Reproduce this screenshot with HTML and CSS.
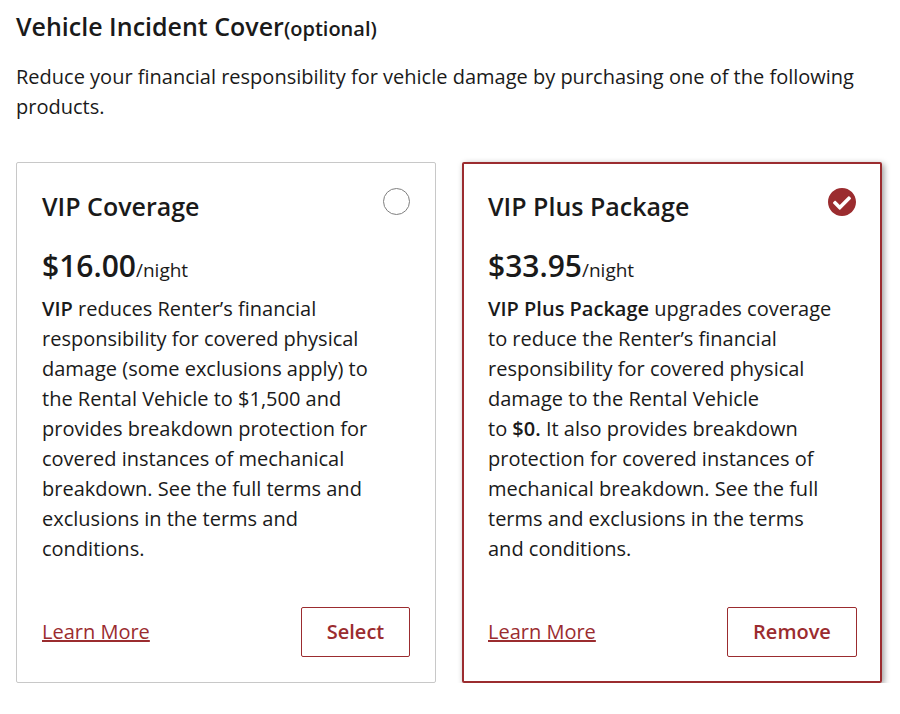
FILE: index.html
```html
<!DOCTYPE html>
<html lang="en">
<head>
<meta charset="utf-8">
<title>Vehicle Incident Cover</title>
<link rel="stylesheet" href="styles.css">
</head>
<body>
<section class="cover">
  <h2 class="cover-title">Vehicle Incident Cover<span class="cover-optional">(optional)</span></h2>
  <p class="cover-intro">Reduce your financial responsibility for vehicle damage by purchasing one of the following products.</p>
  <div class="cards">
    <article class="card">
      <div class="card-head">
        <h3 class="card-title">VIP Coverage</h3>
        <span class="radio"></span>
      </div>
      <div class="price"><span class="price-amount">$16.00</span><span class="price-unit">/night</span></div>
      <p class="card-text"><strong>VIP</strong> reduces Renter’s financial responsibility for covered physical damage (some exclusions apply) to the Rental Vehicle to $1,500 and provides breakdown protection for covered instances of mechanical breakdown. See the full terms and exclusions in the terms and conditions.</p>
      <div class="card-foot">
        <a class="learn" href="#">Learn More</a>
        <button class="action action-select" type="button">Select</button>
      </div>
    </article>
    <article class="card card-selected">
      <div class="card-head">
        <h3 class="card-title">VIP Plus Package</h3>
        <svg class="check" viewBox="8 8 496 496" width="28" height="28" aria-hidden="true">
          <path fill="#9b2c2f" d="M504 256c0 136.967-111.033 248-248 248S8 392.967 8 256 119.033 8 256 8s248 111.033 248 248zM227.314 387.314l184-184c6.248-6.248 6.248-16.379 0-22.627l-22.627-22.627c-6.248-6.249-16.379-6.249-22.628 0L216 308.118l-70.059-70.059c-6.248-6.248-16.379-6.248-22.628 0l-22.627 22.627c-6.248 6.248-6.248 16.379 0 22.627l104 104c6.249 6.249 16.379 6.249 22.628 0z"/>
        </svg>
      </div>
      <div class="price"><span class="price-amount">$33.95</span><span class="price-unit">/night</span></div>
      <p class="card-text"><strong>VIP Plus Package</strong> upgrades coverage to reduce the Renter’s financial responsibility for covered physical damage to the Rental Vehicle<br>to <strong>$0.</strong> It also provides breakdown protection for covered instances of mechanical breakdown. See the full terms and exclusions in the terms and conditions.</p>
      <div class="card-foot">
        <a class="learn" href="#">Learn More</a>
        <button class="action action-remove" type="button">Remove</button>
      </div>
    </article>
  </div>
</section>
</body>
</html>
```
FILE: styles.css
```css
* { box-sizing: border-box; }
html, body { margin: 0; background: #fff; }
body {
  font-family: "Open Sans", sans-serif;
  font-size: 20px;
  line-height: 30px;
  color: #1a1a1a;
  overflow: hidden;
}
.cover { padding: 8px 18px 0 16px; }
.cover-title {
  margin: 0;
  font-size: 25px;
  line-height: 36px;
  font-weight: 600;
}
.cover-optional { font-size: 20px; }
.cover-intro { margin: 15px 0 0; }
.cards {
  display: grid;
  grid-template-columns: 420px 420px;
  gap: 26px;
  margin-top: 40px;
}
.card {
  height: 521px;
  padding: 25px;
  border: 1px solid #c8c8c8;
  border-radius: 2px;
  display: flex;
  flex-direction: column;
}
.card-selected {
  border: 2px solid #9b2c2f;
  padding: 24px 23px 24px 24px;
  box-shadow: 2px 2px 6px rgba(0, 0, 0, 0.4);
}
.card-head {
  display: flex;
  justify-content: space-between;
  align-items: flex-start;
  height: 57px;
}
.card-title {
  margin: 0;
  font-size: 25px;
  line-height: 36px;
  font-weight: 600;
}
.radio {
  width: 27px;
  height: 27px;
  border: 1px solid #7f7f7f;
  border-radius: 50%;
}
.check { margin: 0 1px 0 0; }
.price { line-height: 41px; height: 49px; }
.price-amount { font-size: 30px; font-weight: 600; }
.price-unit { font-size: 19px; }
.card-text { margin: 0; padding-right: 20px; }
.card-text strong { font-weight: 600; }
.card-foot {
  margin-top: auto;
  display: flex;
  justify-content: space-between;
  align-items: center;
}
.learn { color: #9b2c2f; text-decoration: underline; }
.action {
  height: 50px;
  padding: 0;
  background: #fff;
  border: 1px solid #9b2c2f;
  border-radius: 2px;
  color: #9b2c2f;
  font: 600 20px/28px "Open Sans", sans-serif;
}
.action-select { width: 109px; }
.action-remove { width: 130px; }
```
